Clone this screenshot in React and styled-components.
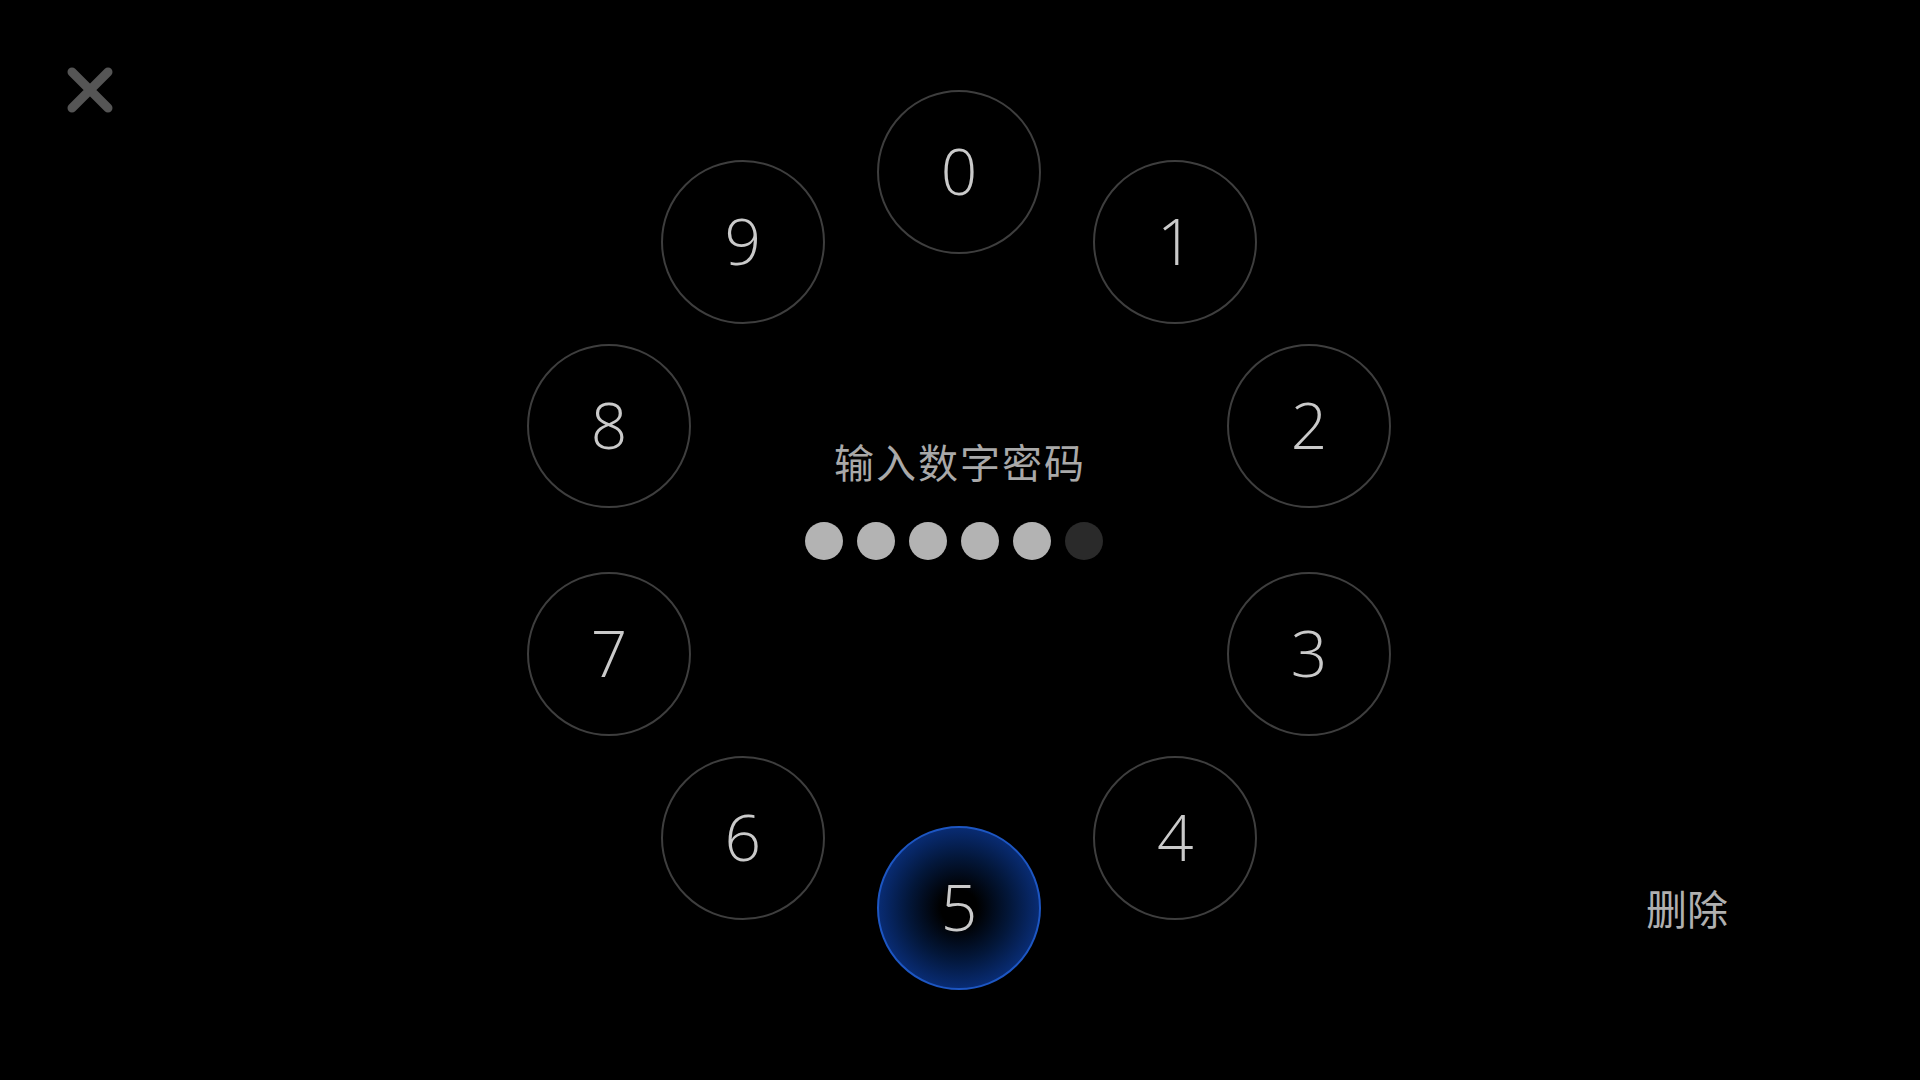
import styled, { createGlobalStyle } from 'styled-components';

const GlobalStyle = createGlobalStyle`
  html, body {
    margin: 0;
    padding: 0;
    background: #000;
  }
`;

const Page = styled.div`
  width: 100vw;
  height: 100vh;
  display: grid;
  grid-template-columns: 1fr 900px 1fr;
  align-items: center;
  background: #000;
  overflow: hidden;
  font-family: "Noto Sans CJK SC", "Noto Sans", sans-serif;
`;

const LeftSide = styled.div`
  align-self: stretch;
  padding: 67px 0 0 67px;
`;

const CloseButton = styled.button`
  width: 46px;
  height: 46px;
  padding: 0;
  border: none;
  background: none;
  cursor: pointer;
  display: block;
`;

const Dial = styled.div`
  position: relative;
  width: 900px;
  height: 900px;
  margin-left: -1px;
  display: flex;
  align-items: center;
  justify-content: center;
`;

const Key = styled.button`
  position: absolute;
  width: 164px;
  height: 164px;
  margin: -82px 0 0 -82px;
  border-radius: 50%;
  box-sizing: border-box;
  border: 2px solid ${(p) => (p.$active ? '#1d56c2' : '#3e3e3e')};
  background: ${(p) =>
    p.$active
      ? 'radial-gradient(circle, #000 16%, #03173a 45%, #0a3182 78%, #0e45a6 100%)'
      : '#000'};
  color: #cacaca;
  font-family: "Open Sans", sans-serif;
  font-weight: 300;
  font-size: 64px;
  line-height: 1;
  display: flex;
  align-items: center;
  justify-content: center;
  padding: 0 0 2px;
  cursor: pointer;
`;

const Center = styled.div`
  display: flex;
  flex-direction: column;
  align-items: center;
  gap: 41px;
  padding-bottom: 79px;
`;

const Title = styled.div`
  font-size: 40px;
  line-height: 40px;
  color: #a9a9a9;
  letter-spacing: 2px;
  margin-left: 2px;
`;

const Dots = styled.div`
  display: flex;
  gap: 14px;
  margin-right: 10px;
`;

const Dot = styled.span`
  width: 38px;
  height: 38px;
  border-radius: 50%;
  background: ${(p) => (p.$filled ? '#b3b3b3' : '#2a2a2a')};
`;

const RightSide = styled.div`
  align-self: stretch;
  display: flex;
  flex-direction: column;
  justify-content: flex-end;
  padding: 0 0 152px 236px;
`;

const DeleteButton = styled.button`
  align-self: flex-start;
  border: none;
  background: none;
  padding: 0;
  font-family: "Noto Sans CJK SC", sans-serif;
  font-size: 41px;
  line-height: 41px;
  color: #b0b0b0;
  cursor: pointer;
`;

const digits = [0, 1, 2, 3, 4, 5, 6, 7, 8, 9];
const RADIUS = 368;

function App() {
  const entered = 5;

  return (
    <Page>
      <GlobalStyle />
      <LeftSide>
        <CloseButton aria-label="关闭">
          <svg width="46" height="46" viewBox="0 0 46 46">
            <path
              d="M5 5 L41 41 M41 5 L5 41"
              stroke="#555"
              strokeWidth="9"
              strokeLinecap="round"
              fill="none"
            />
          </svg>
        </CloseButton>
      </LeftSide>
      <Dial>
        {digits.map((d) => {
          const a = (d * 36 * Math.PI) / 180;
          const left = 450 + RADIUS * Math.sin(a);
          const top = 450 - RADIUS * Math.cos(a);
          return (
            <Key key={d} $active={d === 5} style={{ left, top }}>
              {d}
            </Key>
          );
        })}
        <Center>
          <Title>输入数字密码</Title>
          <Dots>
            {[0, 1, 2, 3, 4, 5].map((i) => (
              <Dot key={i} $filled={i < entered} />
            ))}
          </Dots>
        </Center>
      </Dial>
      <RightSide>
        <DeleteButton>删除</DeleteButton>
      </RightSide>
    </Page>
  );
}

export default App;
